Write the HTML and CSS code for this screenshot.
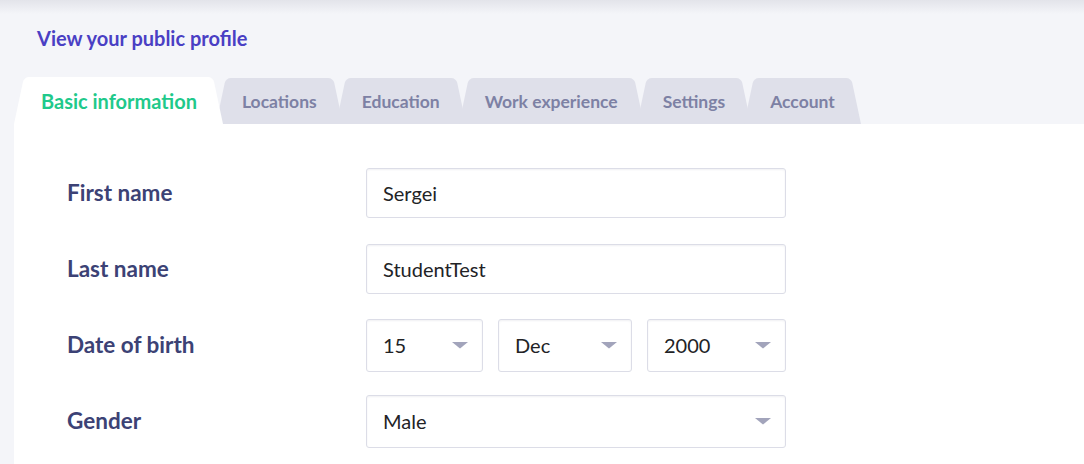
FILE: index.html
```html
<!DOCTYPE html>
<html lang="en">
<head>
<meta charset="utf-8">
<title>Profile</title>
<link rel="stylesheet" href="styles.css">
</head>
<body>
<div class="topshade"></div>
<div class="page">
  <a class="profile-link" href="#">View your public profile</a>
  <nav class="tabs">
    <div class="tab active">Basic information</div>
    <div class="tab">Locations</div>
    <div class="tab">Education</div>
    <div class="tab">Work experience</div>
    <div class="tab">Settings</div>
    <div class="tab">Account</div>
  </nav>
  <section class="panel">
    <div class="form">
      <div class="label">First name</div>
      <input class="field" type="text" value="Sergei">
      <div class="label">Last name</div>
      <input class="field" type="text" value="StudentTest">
      <div class="label">Date of birth</div>
      <div class="date-row">
        <div class="select"><span>15</span><svg class="caret" width="16" height="7" viewBox="0 0 16 7"><polygon points="0,0 16,0 8,6.5"/></svg></div>
        <div class="select"><span>Dec</span><svg class="caret" width="16" height="7" viewBox="0 0 16 7"><polygon points="0,0 16,0 8,6.5"/></svg></div>
        <div class="select"><span>2000</span><svg class="caret" width="16" height="7" viewBox="0 0 16 7"><polygon points="0,0 16,0 8,6.5"/></svg></div>
      </div>
      <div class="label">Gender</div>
      <div class="select"><span>Male</span><svg class="caret" width="16" height="7" viewBox="0 0 16 7"><polygon points="0,0 16,0 8,6.5"/></svg></div>
    </div>
  </section>
</div>
</body>
</html>
```
FILE: styles.css
```css
html, body {
  margin: 0;
  padding: 0;
}
body {
  background: #f4f5f9;
  font-family: Lato, "Noto Sans", sans-serif;
  overflow: hidden;
}
.topshade {
  height: 14px;
  background: linear-gradient(#e3e4ea, #f4f5f9);
}
.page {
  padding: 12px 0 0 14px;
}
.profile-link {
  display: inline-block;
  margin-left: 23px;
  color: #4a3fc4;
  font-weight: 700;
  font-size: 20px;
  line-height: 24px;
  text-decoration: none;
}
.tabs {
  display: flex;
  align-items: flex-end;
  margin-top: 28px;
  height: 46px;
}
.tab {
  position: relative;
  z-index: 0;
  height: 46px;
  padding: 0 26px;
  margin-left: -7px;
  display: flex;
  align-items: center;
  font-size: 17.5px;
  font-weight: 700;
  color: #7d81a4;
  white-space: nowrap;
}
.tab::before,
.tab::after {
  content: "";
  position: absolute;
  top: 0;
  bottom: 0;
  width: 60%;
  background: #dfe0ea;
  z-index: -1;
}
.tab::before {
  left: 0;
  border-top-left-radius: 5px;
  transform: skewX(-12deg);
  transform-origin: bottom left;
}
.tab::after {
  right: 0;
  border-top-right-radius: 5px;
  transform: skewX(12deg);
  transform-origin: bottom right;
}
.tab:first-child {
  margin-left: 0;
  padding-left: 27px;
}
.tab.active {
  z-index: 2;
  color: #1fc98b;
  font-size: 20px;
  padding-top: 1px;
}
.tab.active::before,
.tab.active::after {
  background: #ffffff;
}
.panel {
  background: #ffffff;
  padding: 31px 0 0 53px;
  min-height: 400px;
}
.form {
  display: grid;
  grid-template-columns: 299px 420px;
  grid-auto-rows: 76px;
  align-items: center;
}
.label {
  font-size: 22.5px;
  font-weight: 700;
  color: #3c4275;
  padding-bottom: 2px;
}
.field,
.select {
  box-sizing: border-box;
  border: 1px solid #dcdde7;
  border-radius: 3px;
  box-shadow: inset 0 1px 2px rgba(40, 40, 90, 0.07);
  background: #ffffff;
  font-family: Lato, "Noto Sans", sans-serif;
  font-size: 20px;
  color: #222326;
  padding: 0 14px 0 16px;
}
.field {
  height: 50px;
  width: 420px;
  outline: none;
}
.select {
  height: 53px;
  display: flex;
  align-items: center;
  justify-content: space-between;
}
.caret {
  fill: #a2a4bb;
  display: block;
}
.date-row {
  display: grid;
  grid-template-columns: 117px 134px 1fr;
  column-gap: 15px;
}
```
